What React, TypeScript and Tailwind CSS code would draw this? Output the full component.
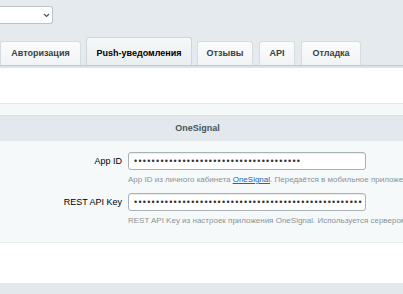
import React from "react";

const tabs = [
  { label: "Авторизация", w: "w-[81px]", ml: "ml-0" },
  { label: "Push-уведомления", w: "w-[106px]", ml: "ml-[5px]", active: true },
  { label: "Отзывы", w: "w-[56px]", ml: "ml-[5px]" },
  { label: "API", w: "w-[36px]", ml: "ml-[6px]" },
  { label: "Отладка", w: "w-[60px]", ml: "ml-[6px]" },
];

function Dots({ count }: { count: number }) {
  return (
    <span className="text-[9px] leading-none tracking-[1.25px] text-[#333]">
      {"•".repeat(count)}
    </span>
  );
}

function Field({
  label,
  dots,
  hint,
}: {
  label: string;
  dots: number;
  hint: React.ReactNode;
}) {
  return (
    <div className="flex">
      <div className="w-[122px] shrink-0 pt-[3px] text-right text-[9px] leading-[12px] text-black">
        {label}
      </div>
      <div className="ml-[6px] min-w-0 flex-1">
        <div className="flex h-[18px] w-[238px] items-center overflow-hidden rounded-[3px] border border-[#a8b2b7] bg-white pl-[5px] shadow-[inset_0_1px_1px_rgba(0,0,0,0.08)]">
          <Dots count={dots} />
        </div>
        <div className="mt-[5px] overflow-hidden whitespace-nowrap text-[8px] leading-[10px] text-[#8a9398]">
          {hint}
        </div>
      </div>
    </div>
  );
}

export default function App() {
  return (
    <div
      className="h-[294px] w-[403px] overflow-hidden bg-[#e4eaed]"
      style={{ fontFamily: '"Liberation Sans", Arial, sans-serif' }}
    >
      {/* site select */}
      <div className="pt-[6px]">
        <div className="flex h-[18px] w-[53px] items-center justify-end rounded-r-[3px] border-y border-r border-[#b9c2c6] bg-white pr-[2px]">
          <svg width="7" height="5" viewBox="0 0 7 5" fill="none">
            <path d="M1 1l2.5 2.5L6 1" stroke="#555" strokeWidth="1.2" />
          </svg>
        </div>
      </div>

      {/* tabs */}
      <div className="mt-[13px] flex items-end">
        {tabs.map((t) => (
          <div
            key={t.label}
            className={`${t.w} ${t.ml} flex shrink-0 items-center justify-center rounded-t-[3px] border border-b-0 text-[9px] font-bold ${
              t.active
                ? "h-[28px] border-[#cfd6da] bg-[linear-gradient(#f6f8f9,#e9eef0)] pt-[4px] text-black"
                : "h-[24px] border-[#d6dde0] bg-[linear-gradient(#fbfcfc,#f0f3f5)] text-[#3a3f42]"
            }`}
          >
            {t.label}
          </div>
        ))}
      </div>
      <div className="h-[3px] border-t border-[#c3cbcf] bg-[#dde3e6]" />

      {/* content */}
      <div className="h-[35px] bg-white" />
      <div className="h-[12px] border-t border-[#e1e7ea] bg-[#f5f8f9]" />
      <div className="flex h-[26px] items-center justify-center border-t border-[#dbe2e5] bg-[#e2e8eb] pr-[8px] text-[9px] font-bold text-[#46545b]">
        OneSignal
      </div>
      <div className="flex h-[101px] flex-col gap-[8px] bg-[#f5f9fa] pt-[11px]">
        <Field
          label="App ID"
          dots={38}
          hint={
            <>
              App ID из личного кабинета{" "}
              <span className="text-[#2067b0] underline">OneSignal</span>. Передаётся в мобильное приложение.
            </>
          }
        />
        <Field
          label="REST API Key"
          dots={52}
          hint="REST API Key из настроек приложения OneSignal. Используется сервером для отправки уведомлений."
        />
      </div>
      <div className="h-[41px] border-t border-[#e8edef] bg-white" />
      <div className="h-[12px] bg-[#e2e8eb]" />
    </div>
  );
}
